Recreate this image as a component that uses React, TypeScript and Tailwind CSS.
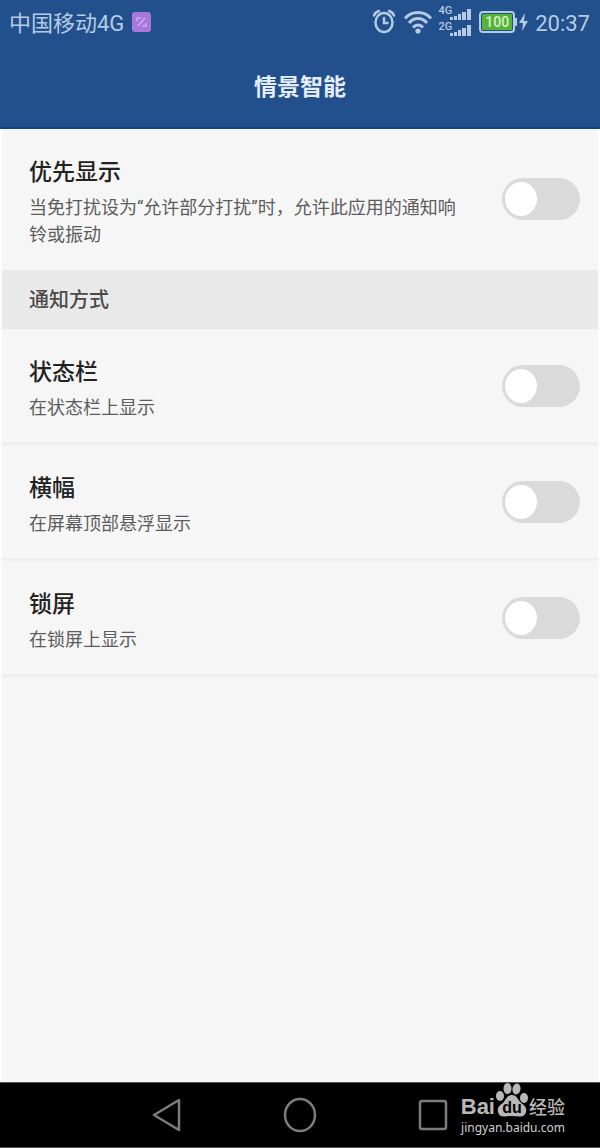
import React, { useState } from 'react';

interface Setting {
  id: string;
  title: string;
  description: string;
}

const prioritySetting: Setting = {
  id: 'priority',
  title: '优先显示',
  description: '当免打扰设为“允许部分打扰”时，允许此应用的通知响铃或振动',
};

const notifySettings: Setting[] = [
  { id: 'status-bar', title: '状态栏', description: '在状态栏上显示' },
  { id: 'banner', title: '横幅', description: '在屏幕顶部悬浮显示' },
  { id: 'lock-screen', title: '锁屏', description: '在锁屏上显示' },
];

const AlarmIcon: React.FC = () => (
  <svg width="24" height="26" viewBox="0 0 24 26" fill="none" stroke="currentColor" strokeWidth="2.5" strokeLinecap="round">
    <ellipse cx="12" cy="13.5" rx="8.5" ry="9.5" />
    <path d="M12 9v5h3.5M2 6.5C3 4 5 2.5 7 2M22 6.5C21 4 19 2.5 17 2" />
  </svg>
);

const WifiIcon: React.FC = () => (
  <svg width="28" height="24" viewBox="0 0 28 24" fill="none" stroke="currentColor" strokeWidth="3">
    <path d="M1 8.5C8 .5 20 .5 27 8.5M5 13C10 7 18 7 23 13M9 17.5c3-3.5 7-3.5 10 0" />
    <circle cx="14" cy="21" r="2.6" fill="currentColor" stroke="none" />
  </svg>
);

const SignalBars: React.FC = () => (
  <svg width="21" height="11" viewBox="0 0 21 11" fill="currentColor">
    <path d="M0 8h3v3H0zM4 7h3v4H4zM8 5h3v6H8zM12 3h4v8h-4zM17 0h4v11h-4z" />
  </svg>
);

const Signal: React.FC<{ label: string }> = ({ label }) => (
  <div className="flex h-[15px] items-end">
    <span className="-mr-0.5 self-start text-[11px] leading-[11px] font-medium">{label}</span>
    <SignalBars />
  </div>
);

const Battery: React.FC = () => (
  <div className="flex items-center">
    <div className="rounded-[4px] border-2 border-[#b5cbe4] p-px">
      <div className="flex h-4 w-[30px] items-center justify-center rounded-[1px] bg-[#55b435] text-[14px] leading-4 font-medium text-[#d9efcf]">
        100
      </div>
    </div>
    <div className="h-2 w-0.5 bg-[#b5cbe4]" />
    <svg className="ml-0.5" width="9" height="18" viewBox="0 0 9 18" fill="currentColor">
      <path d="M6 0 0 10h4L3 18l6-10H5z" />
    </svg>
  </div>
);

const StatusBar: React.FC = () => (
  <div className="flex h-11 items-center justify-between pr-2.5 pl-[9px] text-[22px] text-[#b5cbe4]">
    <div className="flex items-center gap-2">
      <span className="pt-0.5">中国移动4G</span>
      <svg width="19" height="20" viewBox="0 0 19 20">
        <rect width="19" height="20" rx="3" fill="#a878dc" />
        <path d="M5 9V6h4M14 11v3h-4M6 14l7-8" fill="none" stroke="#cdb0ee" strokeWidth="1.5" />
      </svg>
    </div>
    <div className="flex items-center">
      <AlarmIcon />
      <div className="ml-2">
        <WifiIcon />
      </div>
      <div className="ml-1.5 flex flex-col gap-px pb-1">
        <Signal label="4G" />
        <Signal label="2G" />
      </div>
      <div className="ml-2">
        <Battery />
      </div>
      <span className="ml-[7px] pt-0.5">20:37</span>
    </div>
  </div>
);

const SettingRow: React.FC<{ setting: Setting }> = ({ setting }) => {
  const [enabled, setEnabled] = useState(false);

  return (
    <div className="flex items-center gap-8 pt-[27px] pr-[18px] pb-[21px] pl-[27px]">
      <label htmlFor={setting.id} className="flex flex-1 flex-col gap-1">
        <span className="text-[23px] leading-[34px] font-medium text-[#222222]">{setting.title}</span>
        <span className="text-[18px] leading-[27px] text-[#5c5c5c]">{setting.description}</span>
      </label>
      <input
        id={setting.id}
        type="checkbox"
        role="switch"
        checked={enabled}
        onChange={(e) => setEnabled(e.target.checked)}
        className="mb-1.5 flex h-[42px] w-[78px] shrink-0 cursor-pointer appearance-none items-center rounded-full bg-[#dadada] px-[3px] transition-colors before:h-[34px] before:w-8 before:rounded-[50%] before:bg-white before:transition-transform checked:bg-[#22508d] checked:before:translate-x-10"
      />
    </div>
  );
};

const BaiduMark: React.FC = () => (
  <div className="absolute top-0 right-[35px] text-[#b8b8b8]">
    <div className="flex h-[34px] items-end gap-px">
      <span className="font-['Liberation_Sans',sans-serif] text-[22px] leading-5 font-bold">Bai</span>
      <svg width="32" height="34" viewBox="0 0 32 34" fill="currentColor">
        <ellipse cx="4" cy="13" rx="4" ry="5" />
        <ellipse cx="11.5" cy="5.5" rx="4" ry="5.5" />
        <ellipse cx="20.5" cy="6" rx="4" ry="5.5" transform="rotate(10 20.5 6)" />
        <ellipse cx="28" cy="15" rx="4" ry="5" />
        <path d="M16 12c-5 0-6 5-9 8-4 2.500-6 5-5 9 1 4 4 5 7 4.500 5-.7 9-.7 14 0 3 .5 6-.5 7-4.500 1-4-1-6.500-5-9-3-3-4-8-9-8z" />
        <text x="16" y="30" textAnchor="middle" fontFamily="Liberation Sans, sans-serif" fontSize="16" fontWeight="700" fill="#000000">
          du
        </text>
      </svg>
      <span className="text-[18px] leading-[19px] font-medium">经验</span>
    </div>
    <div className="mt-[3px] text-right font-['Noto_Sans',sans-serif] text-[12px] leading-4 text-[#d0d0d0]">jingyan.baidu.com</div>
  </div>
);

const NavBar: React.FC = () => (
  <nav className="relative border-y border-[#555555] bg-black">
    <div className="mx-auto grid h-16 w-2/3 grid-cols-3 place-items-center text-[#7c7c7c]">
      <button type="button" aria-label="返回">
        <svg width="30" height="36" viewBox="0 0 30 36" fill="none" stroke="currentColor" strokeWidth="2.5" strokeLinejoin="round">
          <path d="M27 3v30L2 18z" />
        </svg>
      </button>
      <button type="button" aria-label="主屏幕">
        <svg width="34" height="36" viewBox="0 0 34 36" fill="none" stroke="currentColor" strokeWidth="2.5">
          <ellipse cx="17" cy="18" rx="15" ry="16" />
        </svg>
      </button>
      <button type="button" aria-label="最近任务">
        <svg width="30" height="32" viewBox="0 0 30 32" fill="none" stroke="currentColor" strokeWidth="2.5">
          <rect x="2" y="2" width="26" height="28" rx="2" />
        </svg>
      </button>
    </div>
    <BaiduMark />
  </nav>
);

export default function App() {
  return (
    <div className="flex min-h-screen flex-col bg-[#f6f6f6] font-[Roboto,'Noto_Sans_CJK_SC',sans-serif]">
      <header className="border-b-2 border-[#174283] bg-[#22508d]">
        <StatusBar />
        <h1 className="pt-[26px] pb-[21px] text-center text-[23px] leading-9 font-bold text-[#e4edf8]">情景智能</h1>
      </header>
      <main className="flex-1 border-x-2 border-[#fcfcfc]">
        <div className="pb-px">
          <SettingRow setting={prioritySetting} />
        </div>
        <h2 className="bg-[#e9e9e9] px-[27px] pt-0.5 text-[20px] leading-[57px] font-medium text-[#4a4a4a]">通知方式</h2>
        {notifySettings.map((setting) => (
          <div key={setting.id} className="border-b-3 border-[#efefef]">
            <SettingRow setting={setting} />
          </div>
        ))}
      </main>
      <NavBar />
    </div>
  );
}
